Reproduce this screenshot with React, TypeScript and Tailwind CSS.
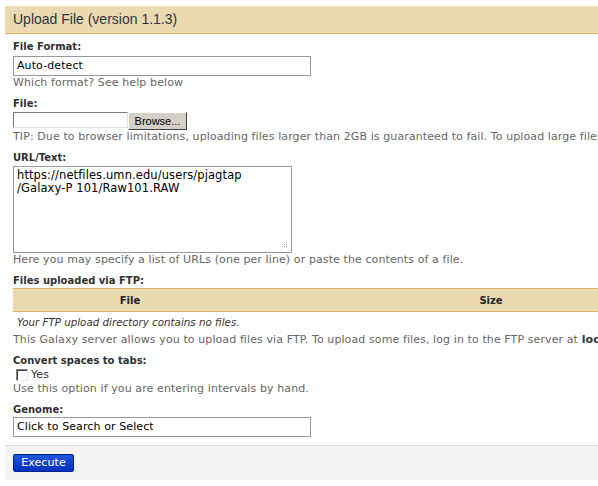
import React from "react";

const label = "text-[10px] leading-[14px] font-bold text-[#303030] tracking-normal";
const help = "text-[11px] leading-[14px] text-[#666666] whitespace-nowrap";

function Row({ children, className = "" }: { children: React.ReactNode; className?: string }) {
  return <div className={`mb-[7px] ${className}`}>{children}</div>;
}

export default function App() {
  return (
    <div
      className="w-[598px] h-[486px] overflow-hidden bg-white pt-[6px] pl-[5px] tracking-[0.1px]"
      style={{ fontFamily: '"DejaVu Sans", Verdana, sans-serif' }}
    >
      <div className="w-[700px]">
        {/* Title bar */}
        <div className="h-[28px] bg-[#ebd9b2] border-b border-[#d8b365] px-2 flex items-center">
          <span
            className="text-[14px] text-[#333333] tracking-normal"
            style={{ fontFamily: '"Liberation Sans", Arial, sans-serif' }}
          >
            Upload File (version 1.1.3)
          </span>
        </div>

        {/* Form body */}
        <div className="px-2 pt-[6px]">
          <Row>
            <div className={label}>File Format:</div>
            <div className="mt-[2px] w-[298px] h-[20px] border border-[#999999] px-[3px] flex items-center text-[11px] text-black">
              Auto-detect
            </div>
            <div className={help}>Which format? See help below</div>
          </Row>

          <Row>
            <div className={label}>File:</div>
            <div className="mt-[1px] flex items-start">
              <div className="w-[115px] h-[16px] border border-t-[#7a7a7a] border-l-[#7a7a7a] border-r-[#e0e0e0] border-b-[#e0e0e0] bg-white" />
              <div
                className="h-[18px] w-[59px] bg-[#d4d0c8] border border-t-white border-l-white border-r-[#404040] border-b-[#404040] flex items-center justify-center text-[11px] text-black tracking-normal"
                style={{ fontFamily: '"Liberation Sans", Arial, sans-serif' }}
              >
                Browse...
              </div>
            </div>
            <div className={help}>
              TIP: Due to browser limitations, uploading files larger than 2GB is guaranteed to fail. To upload large files, use the URL method (below) or FTP (if enabled by the site administrator).
            </div>
          </Row>

          <Row>
            <div className={label}>URL/Text:</div>
            <div className="relative mt-[1px] w-[279px] h-[87px] border border-[#999999] px-[3px] pt-[2px] text-[11.5px] leading-[13px] text-black">
              <div>https://netfiles.umn.edu/users/pjagtap</div>
              <div>/Galaxy-P 101/Raw101.RAW</div>
              <svg className="absolute right-[3px] bottom-[3px]" width="7" height="7" viewBox="0 0 7 7">
                <rect x="5" y="0" width="1" height="1" fill="#b0b0b0" />
                <rect x="3" y="2" width="1" height="1" fill="#b0b0b0" />
                <rect x="5" y="2" width="1" height="1" fill="#b0b0b0" />
                <rect x="1" y="4" width="1" height="1" fill="#b0b0b0" />
                <rect x="3" y="4" width="1" height="1" fill="#b0b0b0" />
                <rect x="5" y="4" width="1" height="1" fill="#b0b0b0" />
              </svg>
            </div>
            <div className={help}>
              Here you may specify a list of URLs (one per line) or paste the contents of a file.
            </div>
          </Row>

          <Row>
            <div className={label}>Files uploaded via FTP:</div>
            <div className="w-[722px]">
              <div className="flex h-[24px] bg-[#ebd9b2] border-y border-[#d8b365] text-[10px] font-bold text-[#222222] tracking-normal">
                <div className="w-[234px] flex items-center justify-center">File</div>
                <div className="flex-1 flex items-center justify-center">Size</div>
              </div>
              <div className="pl-[4px] pt-[3px] text-[10.3px] leading-[14px] italic text-[#333333] tracking-normal">
                Your FTP upload directory contains no files.
              </div>
            </div>
            <div className={`${help} mt-[4px]`}>
              This Galaxy server allows you to upload files via FTP. To upload some files, log in to the FTP server at{" "}
              <b className="text-[#333333]">localhost</b> using your Galaxy credentials.
            </div>
          </Row>

          <Row>
            <div className={label}>Convert spaces to tabs:</div>
            <div className="flex items-center pl-[3px] h-[14px] text-[11px] text-[#303030]">
              <div className="w-[12px] h-[12px] border border-t-[#808080] border-l-[#808080] border-r-[#e6e6e6] border-b-[#e6e6e6] bg-white mr-[3px] shadow-[inset_1px_1px_0_#404040]" />
              Yes
            </div>
            <div className={help}>Use this option if you are entering intervals by hand.</div>
          </Row>

          <div className="mb-[8px]">
            <div className={label}>Genome:</div>
            <div className="w-[298px] h-[20px] border border-[#999999] px-[3px] flex items-center text-[11px] text-black">
              Click to Search or Select
            </div>
          </div>
        </div>

        {/* Footer */}
        <div className="h-[35px] bg-[#f3f3f3] border-t border-[#dddddd] px-2 pt-[8px]">
          <div className="w-[61px] h-[18px] rounded-[2px] bg-gradient-to-b from-[#2255e0] to-[#0030c0] border border-[#00208a] flex items-center justify-center text-[11px] text-white">
            Execute
          </div>
        </div>
      </div>
    </div>
  );
}
